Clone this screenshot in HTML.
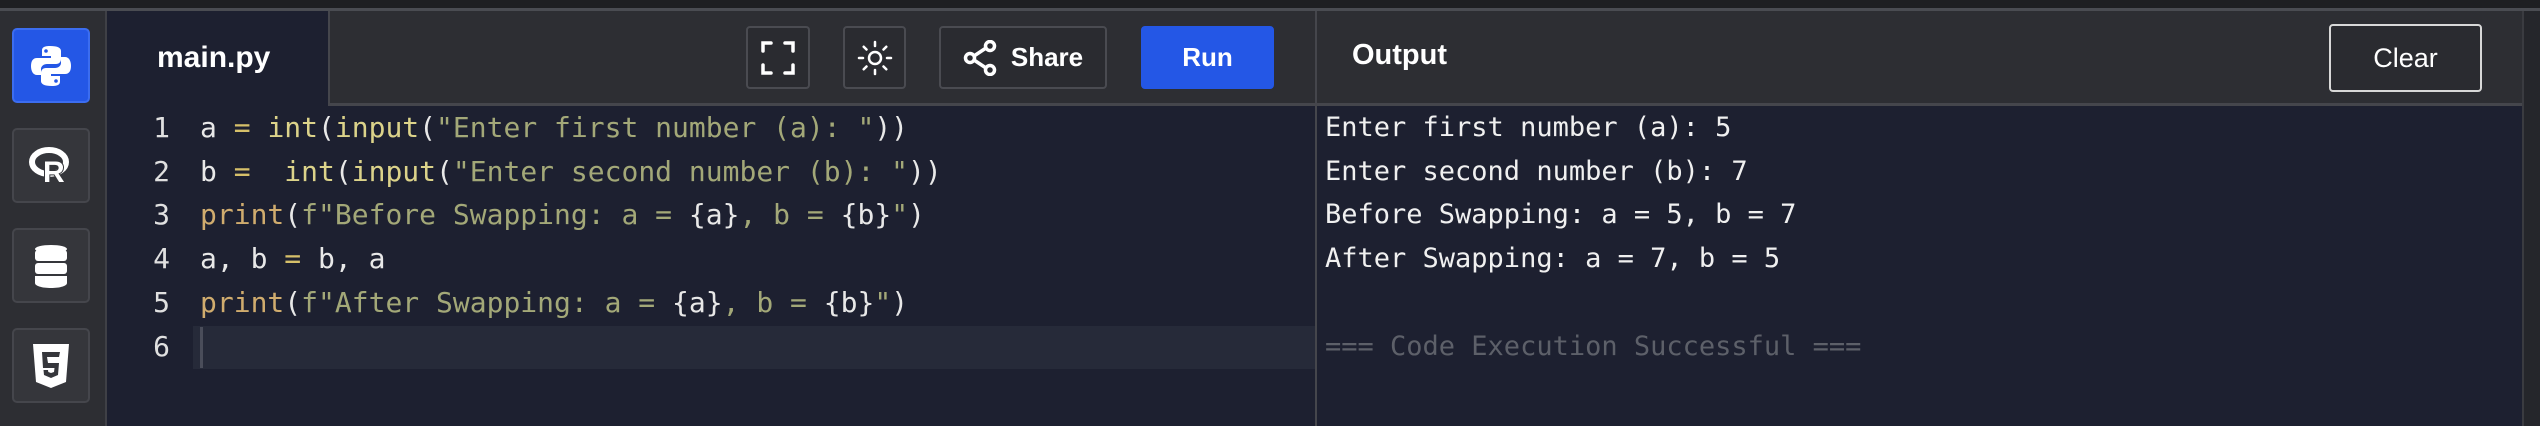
<!DOCTYPE html>
<html><head><meta charset="utf-8"><style>
*{margin:0;padding:0;box-sizing:border-box}
body{width:2540px;height:426px;background:#1d2030;position:relative;overflow:hidden;font-family:"Liberation Sans",sans-serif}
.abs{position:absolute}
#top{left:0;top:0;width:2540px;height:8px;background:#1e1f22}
#topline{left:0;top:8px;width:2540px;height:3px;background:#4a4c52}
#side{left:0;top:11px;width:107px;height:415px;background:#2d2e33;border-right:2px solid #3f4046}
.sb{left:12px;width:78px;height:75px;border:2px solid #45464c;border-radius:5px;background:#35363b;display:flex;align-items:center;justify-content:center}
#toolbar{left:328px;top:11px;width:987px;height:95px;background:#2d2e33;border-left:2px solid #45464c;border-bottom:3px solid #45464c}
#tab{left:109px;top:11px;width:219px;height:95px;background:#1d2030;color:#fff;font-weight:bold;font-size:30px;padding:30px 0 0 48px}
.btn{top:26px;height:63px;border:2px solid #4a4b51;border-radius:4px;background:#2a2b30;display:flex;align-items:center;justify-content:center;color:#fff;font-weight:bold;font-size:26px}
.code{font-family:"DejaVu Sans Mono","Liberation Mono",monospace;font-size:28px;white-space:pre;color:#e8e8e8;line-height:43.7px}
.ln{left:140px;top:106px;width:30px;text-align:right;color:#e0e0e0}
.k{color:#dcd38a}.s{color:#a3a878}.p{color:#d0ac6e}.o{color:#d6c06a}
#out{left:1315px;top:11px;width:1207px;height:415px;border-left:2px solid #45464c}
#outhead{left:1317px;top:11px;width:1205px;height:95px;background:#2d2e33;border-bottom:3px solid #45464c}
#scroll{left:2522px;top:11px;width:18px;height:415px;background:#25262b;border-left:2px solid #3a3b40}
</style></head><body>
<div id="top" class="abs"></div><div id="topline" class="abs"></div>
<div id="side" class="abs"></div>
<div class="abs sb" style="top:28px;background:#2457e6;border-color:#3c6df0">
<svg width="44" height="44" viewBox="0 0 44 44"><path d="M21 2c-8 0-8 3-8 5v5h9v2H8c-4 0-6 3-6 8s2 9 6 9h4v-6c0-3 3-5 6-5h9c3 0 5-2 5-5V7c0-3-3-5-11-5z" fill="#fff"/><path d="M23 42c8 0 8-3 8-5v-5h-9v-2h14c4 0 6-3 6-8s-2-9-6-9h-4v6c0 3-3 5-6 5h-9c-3 0-5 2-5 5v8c0 3 3 5 11 5z" fill="#fff"/><circle cx="17" cy="7" r="1.8" fill="#2457e6"/><circle cx="27" cy="37" r="1.8" fill="#2457e6"/></svg></div>
<div class="abs sb" style="top:128px"><svg width="44" height="40" viewBox="0 0 44 40"><ellipse cx="20" cy="16" rx="17" ry="12" fill="none" stroke="#fff" stroke-width="6"/><text x="14" y="36" font-family="Liberation Sans" font-weight="bold" font-size="30" fill="#fff" stroke="#35363b" stroke-width="2" paint-order="stroke">R</text></svg></div>
<div class="abs sb" style="top:228px"><svg width="34" height="44" viewBox="0 0 34 44"><ellipse cx="17" cy="5" rx="16" ry="4" fill="#fff"/><rect x="1" y="6" width="32" height="11" rx="3" fill="#fff"/><rect x="1" y="19" width="32" height="11" rx="3" fill="#fff"/><path d="M1 32h32v7c0 3-7 5-16 5S1 42 1 39z" fill="#fff"/></svg></div>
<div class="abs sb" style="top:328px"><svg width="38" height="46" viewBox="0 0 38 46"><path d="M1 1h36l-3 38-15 6-15-6z" fill="#fff"/><path d="M10 9h18l-1 5H15l1 6h11l-1 12-7 3-7-3-.5-5h4.5l.3 2 2.7 1 3-1 .5-4H11z" fill="#35363b"/></svg></div>
<div id="toolbar" class="abs"></div>
<div id="tab" class="abs">main.py</div>
<div class="abs btn" style="left:746px;width:64px"><svg width="36" height="36" viewBox="0 0 36 36" fill="none" stroke="#fff" stroke-width="3.5" stroke-linecap="round"><path d="M3 11V3h8M25 3h8v8M33 25v8h-8M11 33H3v-8"/></svg></div>
<div class="abs btn" style="left:843px;width:63px"><svg width="36" height="36" viewBox="0 0 36 36" fill="none" stroke="#fff" stroke-width="2.5" stroke-linecap="round"><circle cx="18" cy="18" r="6"/><path d="M18 2v4M18 30v4M2 18h4M30 18h4M6.7 6.7l2.8 2.8M26.5 26.5l2.8 2.8M6.7 29.3l2.8-2.8M26.5 9.5l2.8-2.8"/></svg></div>
<div class="abs btn" style="left:939px;width:168px;gap:14px"><svg width="34" height="36" viewBox="0 0 34 36" fill="none" stroke="#fff" stroke-width="3.5"><circle cx="27" cy="6" r="4.5"/><circle cx="7" cy="18" r="4.5"/><circle cx="27" cy="30" r="4.5"/><path d="M11 16l12-8M11 20l12 8"/></svg><span>Share</span></div>
<div class="abs btn" style="left:1141px;width:133px;background:#2457e6;border-color:#2457e6">Run</div>
<div class="abs" style="left:193px;top:326px;width:1122px;height:43px;background:#262a39"></div>
<div class="abs" style="left:200px;top:327px;width:3px;height:41px;background:#4a4d5a"></div>
<div class="abs code ln">1
2
3
4
5
6</div>
<div class="abs code" style="left:200px;top:106px">a <span class="o">=</span> <span class="k">int</span>(<span class="k">input</span>(<span class="s">"Enter first number (a): "</span>))
b <span class="o">=</span>  <span class="k">int</span>(<span class="k">input</span>(<span class="s">"Enter second number (b): "</span>))
<span class="p">print</span>(<span class="s">f"Before Swapping: a = </span>{a}<span class="s">, b = </span>{b}<span class="s">"</span>)
a, b <span class="o">=</span> b, a
<span class="p">print</span>(<span class="s">f"After Swapping: a = </span>{a}<span class="s">, b = </span>{b}<span class="s">"</span>)</div>
<div id="out" class="abs"></div>
<div id="outhead" class="abs"></div>
<div class="abs" style="left:1352px;top:39px;color:#fff;font-weight:bold;font-size:29px">Output</div>
<div class="abs btn" style="left:2329px;top:24px;width:153px;height:68px;border-color:#d8d8d8;font-weight:normal;font-size:27px">Clear</div>
<div class="abs code" style="left:1325px;top:106px;color:#f0f0f0;font-size:27px">Enter first number (a): 5
Enter second number (b): 7
Before Swapping: a = 5, b = 7
After Swapping: a = 7, b = 5

<span style="color:#5d6069">=== Code Execution Successful ===</span></div>
<div id="scroll" class="abs"></div>
</body></html>
